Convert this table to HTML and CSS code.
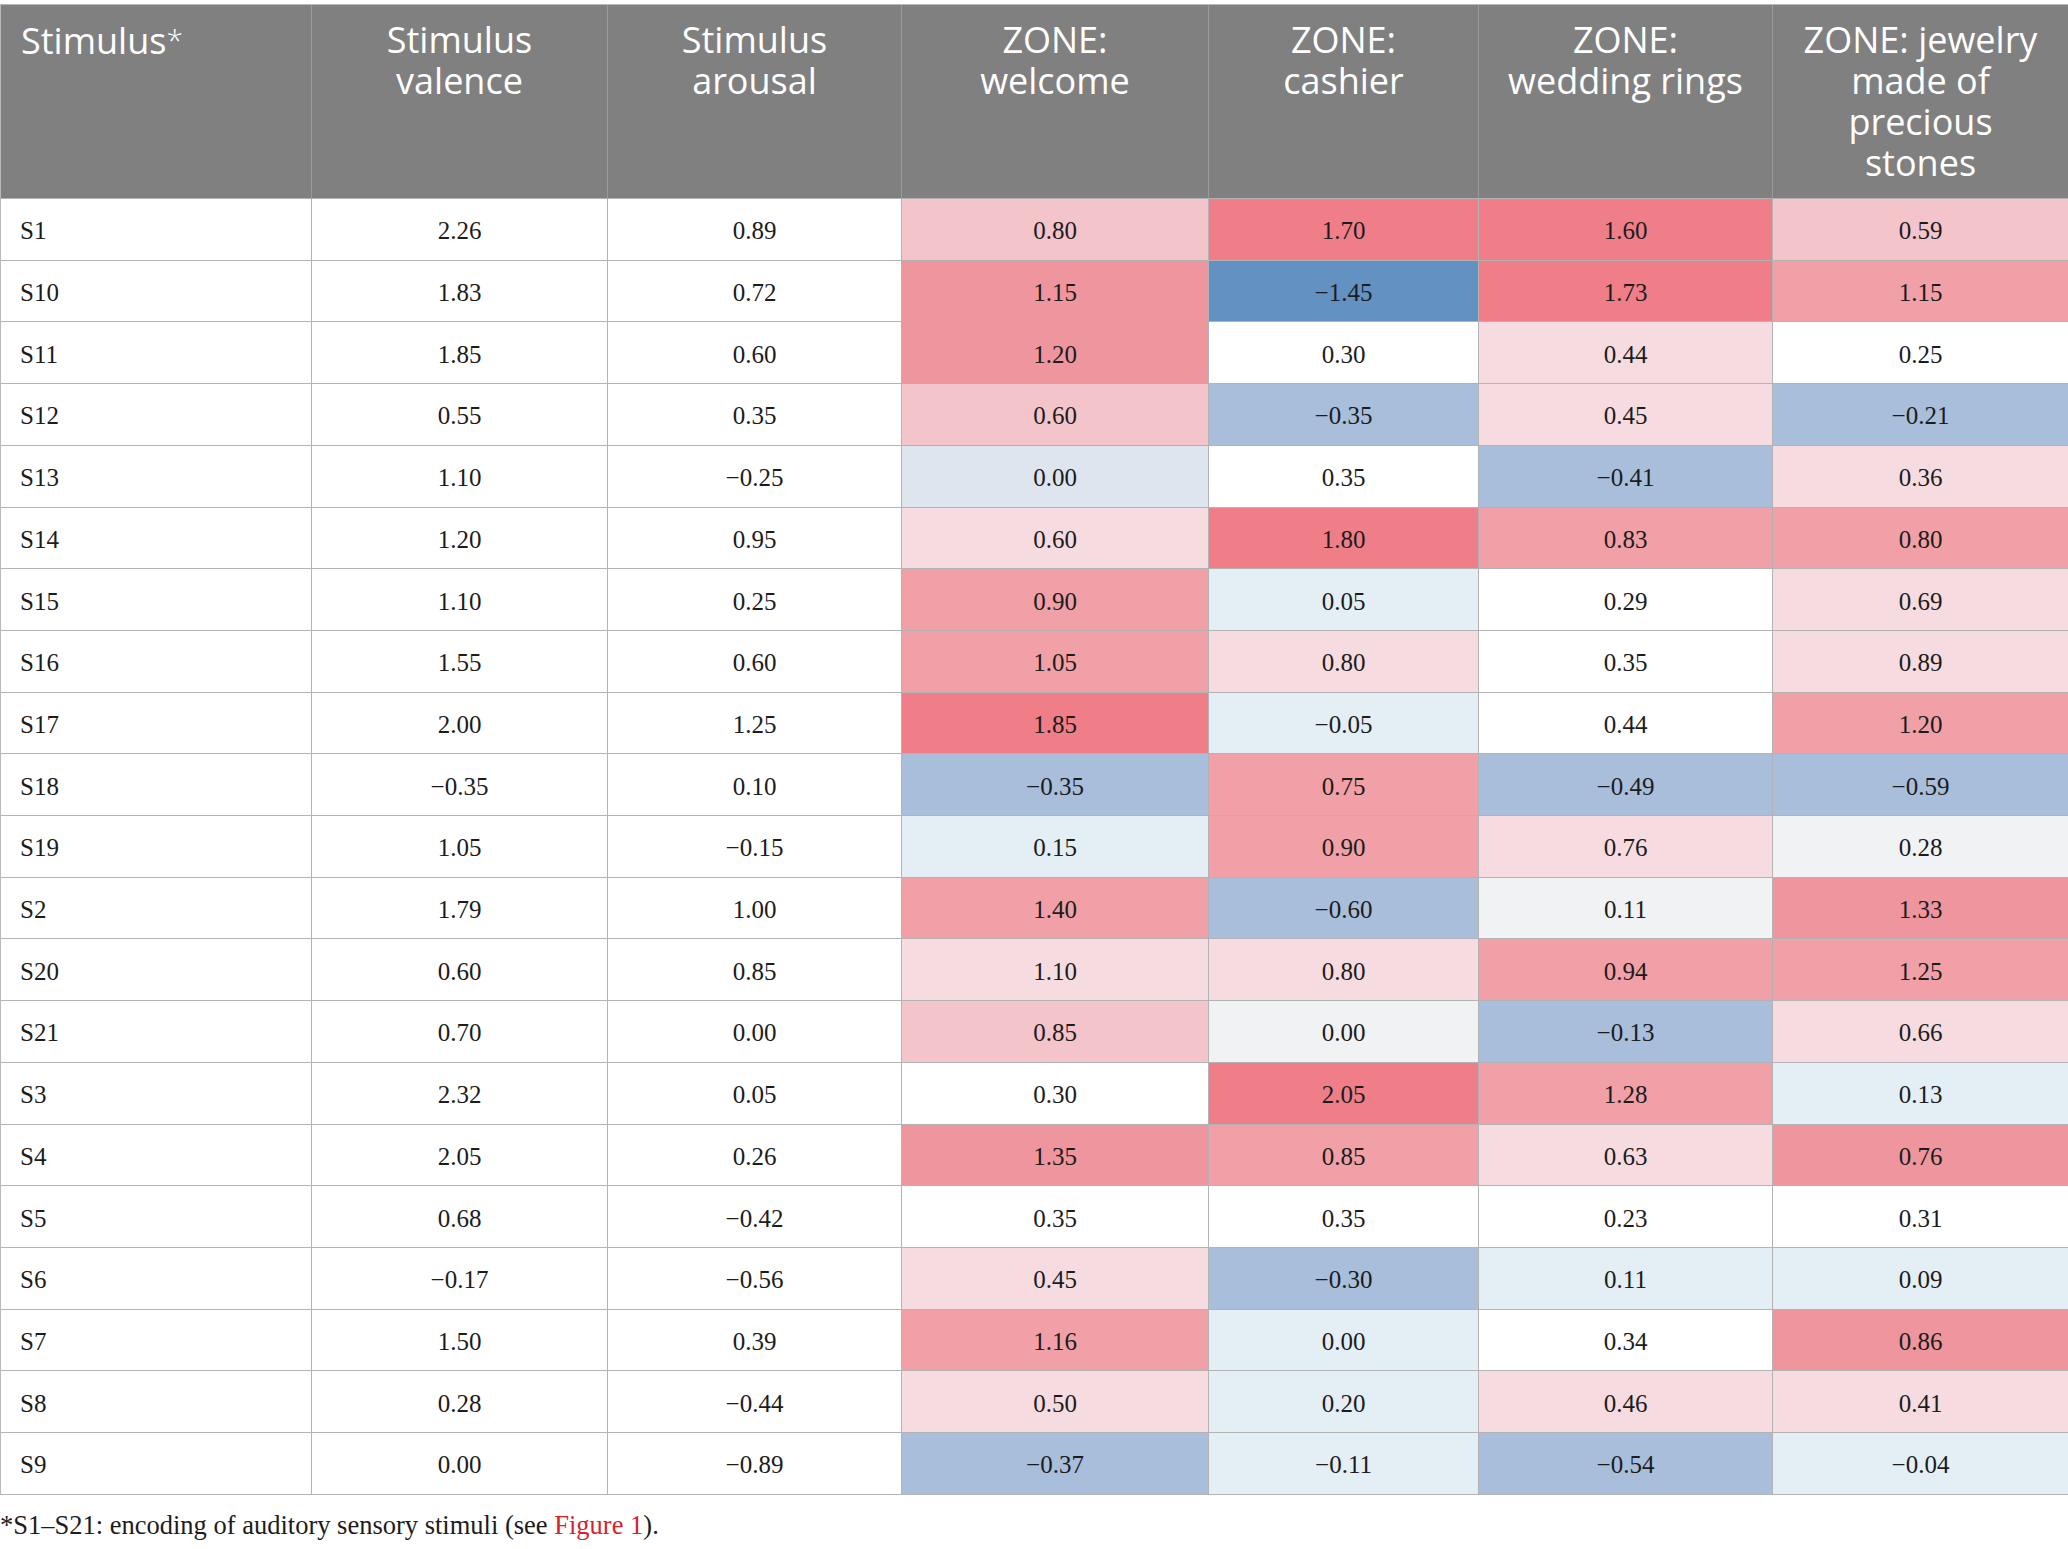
FILE: index.html
```html
<!DOCTYPE html>
<html lang="en">
<head>
<meta charset="utf-8">
<title>Table</title>
<link rel="stylesheet" href="styles.css">
</head>
<body>
<div class="page">
  <div class="table">
    <div class="hd first">Stimulus<span class="ast">*</span></div>
    <div class="hd">Stimulus<br>valence</div>
    <div class="hd">Stimulus<br>arousal</div>
    <div class="hd">ZONE:<br>welcome</div>
    <div class="hd">ZONE:<br>cashier</div>
    <div class="hd">ZONE:<br>wedding rings</div>
    <div class="hd last">ZONE: jewelry<br>made of<br>precious<br>stones</div>

    <div class="c first">S1</div><div class="c">2.26</div><div class="c">0.89</div><div class="c r2">0.80</div><div class="c r4">1.70</div><div class="c r4">1.60</div><div class="c r2 last">0.59</div>
    <div class="c first">S10</div><div class="c">1.83</div><div class="c">0.72</div><div class="c r3a">1.15</div><div class="c b3">&minus;1.45</div><div class="c r4">1.73</div><div class="c r3b last">1.15</div>
    <div class="c first">S11</div><div class="c">1.85</div><div class="c">0.60</div><div class="c r3a">1.20</div><div class="c">0.30</div><div class="c r1">0.44</div><div class="c last">0.25</div>
    <div class="c first">S12</div><div class="c">0.55</div><div class="c">0.35</div><div class="c r2">0.60</div><div class="c b2">&minus;0.35</div><div class="c r1">0.45</div><div class="c b2 last">&minus;0.21</div>
    <div class="c first">S13</div><div class="c">1.10</div><div class="c">&minus;0.25</div><div class="c b1b">0.00</div><div class="c">0.35</div><div class="c b2">&minus;0.41</div><div class="c r1 last">0.36</div>
    <div class="c first">S14</div><div class="c">1.20</div><div class="c">0.95</div><div class="c r1">0.60</div><div class="c r4">1.80</div><div class="c r3b">0.83</div><div class="c r3b last">0.80</div>
    <div class="c first">S15</div><div class="c">1.10</div><div class="c">0.25</div><div class="c r3b">0.90</div><div class="c b1">0.05</div><div class="c">0.29</div><div class="c r1 last">0.69</div>
    <div class="c first">S16</div><div class="c">1.55</div><div class="c">0.60</div><div class="c r3b">1.05</div><div class="c r1">0.80</div><div class="c">0.35</div><div class="c r1 last">0.89</div>
    <div class="c first">S17</div><div class="c">2.00</div><div class="c">1.25</div><div class="c r4">1.85</div><div class="c b1">&minus;0.05</div><div class="c">0.44</div><div class="c r3b last">1.20</div>
    <div class="c first">S18</div><div class="c">&minus;0.35</div><div class="c">0.10</div><div class="c b2">&minus;0.35</div><div class="c r3b">0.75</div><div class="c b2">&minus;0.49</div><div class="c b2 last">&minus;0.59</div>
    <div class="c first">S19</div><div class="c">1.05</div><div class="c">&minus;0.15</div><div class="c b1">0.15</div><div class="c r3b">0.90</div><div class="c r1">0.76</div><div class="c g last">0.28</div>
    <div class="c first">S2</div><div class="c">1.79</div><div class="c">1.00</div><div class="c r3b">1.40</div><div class="c b2">&minus;0.60</div><div class="c g">0.11</div><div class="c r3a last">1.33</div>
    <div class="c first">S20</div><div class="c">0.60</div><div class="c">0.85</div><div class="c r1">1.10</div><div class="c r1">0.80</div><div class="c r3b">0.94</div><div class="c r3b last">1.25</div>
    <div class="c first">S21</div><div class="c">0.70</div><div class="c">0.00</div><div class="c r2">0.85</div><div class="c g">0.00</div><div class="c b2">&minus;0.13</div><div class="c r1 last">0.66</div>
    <div class="c first">S3</div><div class="c">2.32</div><div class="c">0.05</div><div class="c">0.30</div><div class="c r4">2.05</div><div class="c r3b">1.28</div><div class="c b1 last">0.13</div>
    <div class="c first">S4</div><div class="c">2.05</div><div class="c">0.26</div><div class="c r3a">1.35</div><div class="c r3b">0.85</div><div class="c r1">0.63</div><div class="c r3a last">0.76</div>
    <div class="c first">S5</div><div class="c">0.68</div><div class="c">&minus;0.42</div><div class="c">0.35</div><div class="c">0.35</div><div class="c">0.23</div><div class="c last">0.31</div>
    <div class="c first">S6</div><div class="c">&minus;0.17</div><div class="c">&minus;0.56</div><div class="c r1">0.45</div><div class="c b2">&minus;0.30</div><div class="c b1">0.11</div><div class="c b1 last">0.09</div>
    <div class="c first">S7</div><div class="c">1.50</div><div class="c">0.39</div><div class="c r3b">1.16</div><div class="c b1">0.00</div><div class="c">0.34</div><div class="c r3a last">0.86</div>
    <div class="c first">S8</div><div class="c">0.28</div><div class="c">&minus;0.44</div><div class="c r1">0.50</div><div class="c b1">0.20</div><div class="c r1">0.46</div><div class="c r1 last">0.41</div>
    <div class="c first">S9</div><div class="c">0.00</div><div class="c">&minus;0.89</div><div class="c b2">&minus;0.37</div><div class="c b1">&minus;0.11</div><div class="c b2">&minus;0.54</div><div class="c b1 last">&minus;0.04</div>
  </div>
  <p class="note">*S1&ndash;S21: encoding of auditory sensory stimuli (see <a class="ref" href="#">Figure 1</a>).</p>
</div>
</body>
</html>
```

FILE: styles.css
```css
html, body {
  margin: 0;
  padding: 0;
  background: #ffffff;
}

.page {
  width: 2068px;
  padding-top: 4px;
}

.table {
  display: grid;
  grid-template-columns: 311px 296px 294px 307px 270px 294px 296px;
  grid-template-rows: 194px;
  grid-auto-rows: 61.71px;
  border-top: 1px solid #b8b8b8;
  border-left: 1px solid #b8b8b8;
  box-sizing: border-box;
  width: 2068px;
}

.hd {
  box-sizing: border-box;
  background: #7f807f;
  color: #ffffff;
  font-family: "Open Sans", "Noto Sans", sans-serif;
  font-weight: 370;
  font-size: 36px;
  line-height: 41px;
  text-align: center;
  padding: 14px 10px 0;
  border-right: 1px solid #999a99;
  border-bottom: 1px solid #b3b3b3;
}

.hd.first {
  text-align: left;
  padding-left: 20px;
}

.ast {
  font-size: 30px;
  font-weight: 300;
  vertical-align: 3px;
}

.c {
  box-sizing: border-box;
  display: flex;
  align-items: center;
  justify-content: center;
  padding-top: 4px;
  font-family: "Liberation Serif", "Times New Roman", serif;
  font-size: 25px;
  color: #1c1c1c;
  border-right: 1px solid #b3b3b3;
  border-bottom: 1px solid #b3b3b3;
  background: #ffffff;
}

.c.first {
  justify-content: flex-start;
  padding-left: 19px;
}

.r4 { background: #f07e89; }
.r3a { background: #ee959e; }
.r3b { background: #f0a0a6; }
.r2 { background: #f4c4cb; }
.r1 { background: #f6dce0; }
.g { background: #f1f2f4; }
.b1 { background: #e3eef5; }
.b1b { background: #dfe5ef; }
.b2 { background: #a8bedb; }
.b3 { background: #6391c2; }

.note {
  margin: 14px 0 0;
  font-family: "Liberation Serif", "Times New Roman", serif;
  font-size: 26.5px;
  line-height: 32px;
  color: #1c1c1c;
}

.ref {
  color: #d8232f;
  text-decoration: none;
}
```
